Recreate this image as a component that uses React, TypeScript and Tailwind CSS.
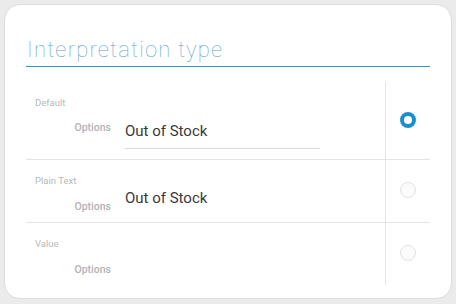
import React from 'react';

const Radio: React.FC<{ checked?: boolean }> = ({ checked }) =>
  checked ? (
    <div className="w-4 h-4 rounded-full border-[4px] border-[#1a8fcb] bg-white" />
  ) : (
    <div className="w-4 h-4 rounded-full border border-[#e2e2e2] bg-[#fbfbfb]" />
  );

export default function App() {
  return (
    <div
      className="w-[456px] h-[304px] bg-[#ebebeb] pt-[4px] pl-[4px]"
      style={{ fontFamily: 'Roboto, "Liberation Sans", sans-serif' }}
    >
      <div className="w-[448px] h-[295px] bg-white rounded-[16px] border border-[#dedede] px-[21px]">
        {/* Title */}
        <div className="pt-[31px] pb-[2px] border-b-[1.5px] border-[#2b95c0]">
          <h2 className="text-[22px] leading-[28px] font-thin tracking-[1.2px] text-[#5fa3cf] pl-[1px]">
            Interpretation type
          </h2>
        </div>

        {/* Rows */}
        <div className="mt-[14.5px]">
          {/* Default */}
          <div className="flex h-[78px] border-b border-[#e4e4e4]">
            <div className="flex-1 border-r border-[#e4e4e4] pt-[15px]">
              <div className="pl-[9px] text-[9.5px] leading-[12px] text-[#b8b8b8]">Default</div>
              <div className="flex items-start mt-[11px]">
                <div className="w-[85px] text-right pt-[1px] text-[10.5px] leading-[14px] font-medium text-[#b3b3b3]">
                  Options
                </div>
                <div className="ml-[14px] w-[195px] pt-[1px] pb-[7px] border-b border-[#dadada] text-[15px] leading-[20px] text-[#3a3a3a]">
                  Out of Stock
                </div>
              </div>
            </div>
            <div className="w-[44px] flex justify-center pt-[30px]">
              <Radio checked />
            </div>
          </div>

          {/* Plain Text */}
          <div className="flex h-[63px] border-b border-[#e4e4e4]">
            <div className="flex-1 border-r border-[#e4e4e4] pt-[15px]">
              <div className="pl-[9px] text-[9.5px] leading-[12px] text-[#b8b8b8]">Plain Text</div>
              <div className="flex items-start">
                <div className="w-[85px] text-right mt-[13px] text-[10.5px] leading-[14px] font-medium text-[#b3b3b3]">
                  Options
                </div>
                <div className="ml-[14px] mt-[1px] text-[15px] leading-[20px] text-[#3a3a3a]">Out of Stock</div>
              </div>
            </div>
            <div className="w-[44px] flex justify-center pt-[22px]">
              <Radio />
            </div>
          </div>

          {/* Value */}
          <div className="flex h-[62px]">
            <div className="flex-1 border-r border-[#e4e4e4] pt-[15px]">
              <div className="pl-[9px] text-[9.5px] leading-[12px] text-[#b8b8b8]">Value</div>
              <div className="w-[85px] text-right mt-[13px] text-[10.5px] leading-[14px] font-medium text-[#b3b3b3]">
                Options
              </div>
            </div>
            <div className="w-[44px] flex justify-center pt-[22px]">
              <Radio />
            </div>
          </div>
        </div>
      </div>
    </div>
  );
}
